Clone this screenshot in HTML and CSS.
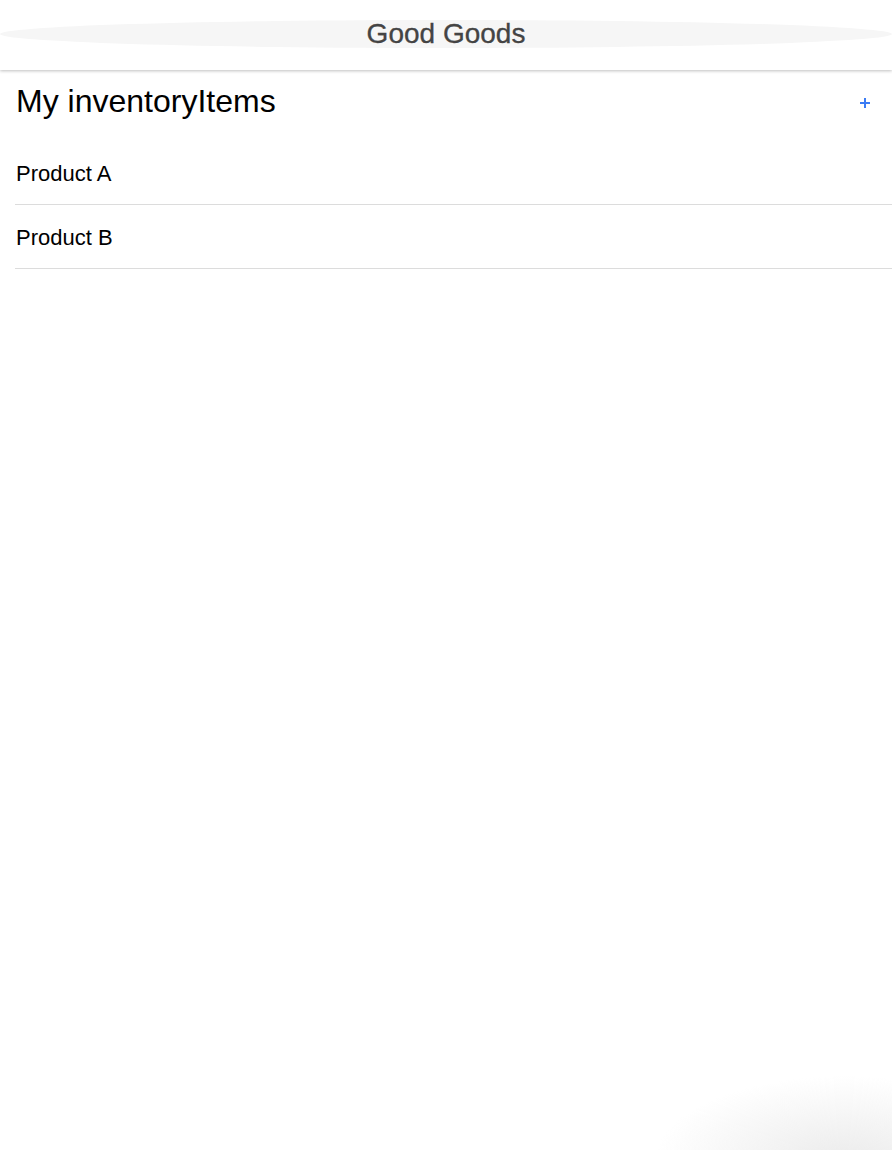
FILE: index.html
```html
<!DOCTYPE html>
<html lang="en">
<head>
    <meta charset="UTF-8">
    <meta name="viewport" content="width=device-width, initial-scale=1.0">
    <title>Good Goods</title>
    <link rel="stylesheet" href="styles.css">
</head>
<body>
    <header class="navbar">
        <h1 class="brand">Good Goods</h1>
    </header>

    <main class="page">
        <div class="page-head">
            <h2>My inventoryItems</h2>
            <button class="add-btn" aria-label="Add item">
                <svg width="12" height="12" viewBox="0 0 12 12">
                    <path d="M6 1v10M1 6h10" stroke="#3b7cf4" stroke-width="2" fill="none"/>
                </svg>
            </button>
        </div>
        <ul class="item-list">
            <li class="item">Product A</li>
            <li class="item">Product B</li>
        </ul>
    </main>

    <div class="corner-glow"></div>
</body>
</html>
```

FILE: styles.css
```css
* {
    margin: 0;
    padding: 0;
    box-sizing: border-box;
    font-family: 'Liberation Sans', Arial, sans-serif;
}

html, body {
    height: 100%;
    background-color: #fff;
}

body {
    overflow: hidden;
}

.navbar {
    height: 70px;
    display: flex;
    align-items: center;
    padding-bottom: 3px;
    background-color: #fff;
    box-shadow: 0 1px 3px rgba(0, 0, 0, 0.25);
    position: relative;
    z-index: 1;
}

.brand {
    width: 100%;
    height: 28px;
    line-height: 28px;
    border-radius: 50%;
    background-color: #f6f6f6;
    text-align: center;
    font-size: 28px;
    font-weight: normal;
    color: #444;
    -webkit-text-stroke: 0.3px #444;
}

.page-head {
    display: flex;
    justify-content: space-between;
    align-items: center;
    height: 62px;
    padding: 0 21px 0 16px;
}

.page-head h2 {
    font-size: 32px;
    font-weight: normal;
    color: #000;
}

.add-btn {
    border: none;
    background: none;
    cursor: pointer;
    display: flex;
    margin-top: 4px;
}

.item-list {
    list-style: none;
    margin-left: 15px;
    margin-top: 9px;
}

.item {
    height: 64px;
    padding-top: 2px;
    line-height: 62px;
    padding-left: 1px;
    font-size: 22px;
    color: #000;
    border-bottom: 1px solid #dcdcdc;
}

.corner-glow {
    position: fixed;
    right: 0;
    bottom: 0;
    width: 320px;
    height: 140px;
    background: radial-gradient(ellipse 190px 85px at 85% 108%, #ebebeb, rgba(255, 255, 255, 0));
    pointer-events: none;
}
```
